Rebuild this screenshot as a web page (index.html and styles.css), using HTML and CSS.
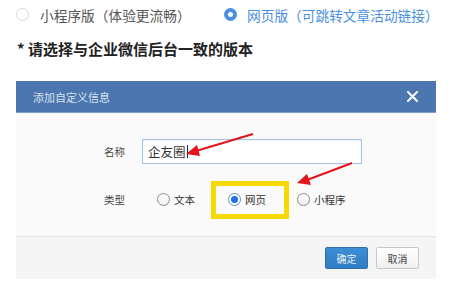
FILE: index.html
```html
<!DOCTYPE html>
<html lang="zh-CN">
<head>
    <meta charset="UTF-8">
    <title>版本选择</title>
    <link rel="stylesheet" href="styles.css">
</head>
<body>

    <!-- version choice -->
    <div class="versions">
        <label class="ver"><span class="dot"></span>小程序版（体验更流畅）</label>
        <label class="ver on"><span class="dot"></span>网页版（可跳转文章活动链接）</label>
    </div>
    <p class="tip">* 请选择与企业微信后台一致的版本</p>

    <!-- dialog screenshot -->
    <div class="dialog">
        <div class="dlg-head">
            <span class="dlg-title">添加自定义信息</span>
            <svg class="close" width="11" height="11" viewBox="0 0 11 11">
                <path d="M1 1 L10 10 M10 1 L1 10" stroke="#fff" stroke-width="2" stroke-linecap="round"/>
            </svg>
        </div>
        <div class="dlg-body">
            <div class="row">
                <span class="lbl">名称</span>
                <div class="input">企友圈<i class="caret"></i></div>
            </div>
            <div class="row">
                <span class="lbl">类型</span>
                <div class="radios">
                    <label class="opt"><span class="rd"></span>文本</label>
                    <label class="opt hl"><span class="rd checked"></span>网页</label>
                    <label class="opt"><span class="rd"></span>小程序</label>
                </div>
            </div>
        </div>
        <div class="dlg-foot">
            <button class="btn primary">确定</button>
            <button class="btn">取消</button>
        </div>

        <!-- red annotation arrows -->
        <svg class="arrows" width="420" height="200" viewBox="0 0 420 200">
            <line x1="237" y1="53" x2="180" y2="70" stroke="#e3141b" stroke-width="2"/>
            <polygon points="170,73 181,64 184,75" fill="#e3141b"/>
            <line x1="336" y1="82" x2="291" y2="99" stroke="#e3141b" stroke-width="2"/>
            <polygon points="281,102 291,93 295,104" fill="#e3141b"/>
        </svg>
    </div>

</body>
</html>
```

FILE: styles.css
```css
body {
    margin: 0;
    background: #fff;
    font-family: "Noto Sans CJK SC", "Noto Sans", sans-serif;
    color: #333;
}
.versions {
    display: flex;
    align-items: center;
    height: 29px;
    padding-left: 16px;
}
.ver {
    display: flex;
    align-items: center;
    gap: 11px;
    font-size: 13.7px;
    color: #555;
}
.ver:first-child {
    width: 208px;
}
.ver.on {
    color: #4a90e2;
    gap: 10px;
}
.dot {
    width: 11px;
    height: 11px;
    border: 1px solid #d4d7de;
    border-radius: 50%;
    background: #fff;
}
.ver.on .dot {
    width: 5px;
    height: 5px;
    border: 4px solid #4a90e2;
}
.tip {
    margin: 5px 0 0 17px;
    font-size: 15px;
    font-weight: bold;
    line-height: 30px;
    color: #222;
}
.dialog {
    position: relative;
    width: 420px;
    margin: 17px 0 0 16px;
}
.dlg-head {
    display: flex;
    align-items: center;
    justify-content: space-between;
    height: 31px;
    padding: 0 17px;
    background: #4b76b0;
    border-bottom: 1px solid #7ea0cf;
}
.dlg-title {
    font-size: 11px;
    color: #d9e2ee;
}
.close {
    margin-right: 1px;
}
.dlg-body {
    height: 124px;
    padding-top: 26px;
    box-sizing: border-box;
    background: #fafafa;
    border-bottom: 1px solid #e6e6e6;
}
.row {
    display: flex;
    align-items: center;
    margin-bottom: 28px;
}
.lbl {
    width: 109px;
    text-align: right;
    font-size: 10.5px;
    color: #444;
    margin-right: 17px;
}
.input {
    display: flex;
    align-items: center;
    width: 213px;
    height: 23px;
    padding-left: 5px;
    border: 1px solid #9ec3e8;
    background: #fff;
    font-size: 12.5px;
    color: #333;
    box-shadow: inset 0 1px 2px rgba(0, 0, 0, 0.06);
}
.caret {
    width: 1px;
    height: 13px;
    margin-left: 1px;
    background: #222;
}
.radios {
    display: flex;
    align-items: center;
    margin-left: 15px;
}
.opt {
    position: relative;
    display: flex;
    align-items: center;
    gap: 4px;
    font-size: 10.5px;
    color: #333;
}
.opt:nth-child(1) { margin-right: 33px; }
.opt:nth-child(2) { margin-right: 31px; }
.rd {
    width: 11px;
    height: 11px;
    border: 1px solid #8a8a8a;
    border-radius: 50%;
    background: linear-gradient(#fff, #eee);
    position: relative;
}
.rd.checked {
    border-color: #5a8fd6;
    background: #fff;
}
.rd.checked::after {
    content: "";
    position: absolute;
    left: 2px;
    top: 2px;
    width: 7px;
    height: 7px;
    border-radius: 50%;
    background: #1f6fe6;
}
/* yellow highlight around the chosen option */
.opt.hl::after {
    content: "";
    position: absolute;
    left: -17px;
    right: -23px;
    top: -11px;
    bottom: -12px;
    border: 5px solid #f5d900;
}
.dlg-foot {
    display: flex;
    justify-content: flex-end;
    gap: 8px;
    height: 42px;
    padding: 10px 17px 0 0;
    box-sizing: border-box;
    background: #f5f5f5;
}
.btn {
    width: 43px;
    height: 22px;
    padding: 0;
    font-family: inherit;
    font-size: 10px;
    color: #444;
    background: linear-gradient(#fff, #f0f0f0);
    border: 1px solid #c8c8c8;
    border-radius: 2px;
}
.btn.primary {
    color: #e8f0fa;
    background: linear-gradient(#3c8fd6, #2f7cc2);
    border-color: #2e6fb0;
}
.arrows {
    position: absolute;
    left: 0;
    top: 0;
    pointer-events: none;
}
```
